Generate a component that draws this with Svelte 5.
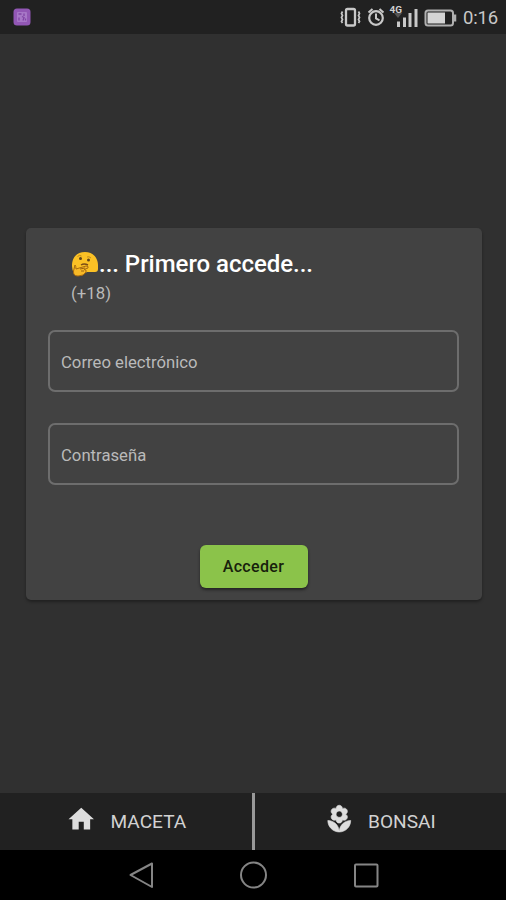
<script>
  const tabs = [
    { label: 'MACETA', icon: 'home' },
    { label: 'BONSAI', icon: 'flower' },
  ];
  const fields = ['Correo electrónico', 'Contraseña'];
</script>

<div class="screen">
  <header class="status">
    <svg class="notice" width="18" height="18" viewBox="0 0 18 18">
      <rect x=".5" y=".5" width="17" height="17" rx="3.5" fill="#9257b5" />
      <rect x="4" y="4" width="10" height="10" rx="1" fill="#a777c7" />
      <path d="M5.5 6h3M11 5.5v2.5M6 9.5v3M9 8.5l2 1-1 3M12.5 10.5v2" stroke="#8145a5" stroke-width="1.3" fill="none" />
    </svg>
    <svg class="indicators" width="118" height="34" viewBox="0 0 118 34" fill="none" stroke="#c8c8c8">
      <rect x="6" y="9" width="9" height="16.500" rx="1.5" stroke-width="2.300" />
      <path d="M2.500 11.500l-1 2 1 2-1 2 1 2-1 2 1 1.500M18.500 11.500l1 2-1 2 1 2-1 2 1 2-1 1.500" stroke-width="1.700" />
      <circle cx="36" cy="18" r="6.800" stroke-width="2.200" />
      <path d="M36 13.500v5l3.500 1.800M28.500 12.500l4-3.500M43.500 12.500l-4-3.500" stroke-width="2" />
      <path d="M54 13h8l-4 5z" fill="#555" stroke="none" />
      <path d="M58.500 21.500v5.500M64.500 17.500v9.500M70 13v14M76 9v18" stroke-width="3" />
      <rect x="85.500" y="10.500" width="27.500" height="15" rx="2.500" stroke="#b0b0b0" stroke-width="2" />
      <rect x="87.500" y="12.500" width="17.500" height="11" fill="#d4d4d4" stroke="none" />
      <path d="M115 14.500v7" stroke="#b0b0b0" stroke-width="2.500" />
      <text x="49.500" y="13" class="network" textLength="12.500" lengthAdjust="spacingAndGlyphs">4G</text>
    </svg>
    <span class="clock">0:16</span>
  </header>

  <main>
    <section class="card">
      <div class="heading">
        <h1>
          <svg width="28" height="26" viewBox="0 0 28 26">
            <path d="M1 15C1 6 6 1 14 1s13 6 13 13v4q0 3-3 3h-8L9 25 3 22Q1 19 1 15Z" fill="#fbc125" />
            <circle cx="9.500" cy="7.500" r="1.500" fill="#60451c" />
            <circle cx="17.500" cy="9" r="1.500" fill="#60451c" />
            <path d="M6.500 5.500q2-2 4-.5M16 6q2-1 4 1" fill="none" stroke="#c08a1c" />
            <path d="M10 14q3-2 7 0" fill="none" stroke="#7b4c16" stroke-width="1.400" />
            <path d="M4 14q1 1 1 4l10-3q3 0 2 2l-4 1.500q3 0 2 2.500-2 4-8 4Q2 25 2.500 20Z" fill="#f7b927" stroke="#a86b10" stroke-width="1" />
            <path d="M9 18l5-1M10 20h3" stroke="#9b6210" stroke-width="1" />
          </svg><span>... Primero accede...</span>
        </h1>
        <p>(+18)</p>
      </div>
      {#each fields as field}
        <div class="field"><span>{field}</span></div>
      {/each}
      <button>Acceder</button>
    </section>
  </main>

  <nav class="tabs">
    {#each tabs as tab}
      <div class="tab {tab.icon}">
        <svg width="30.500" height="30.500" viewBox="0 0 24 24" fill="#dedede">
          {#if tab.icon === 'home'}
            <path d="M10 20v-6h4v6h5v-8h3L12 3 2 12h3v8z" />
          {:else}
            <path stroke="#dedede" stroke-width=".5" d="M12 22c4.97 0 9-4.03 9-9-4.97 0-9 4.03-9 9zM5.6 10.25c0 1.38 1.12 2.5 2.5 2.5.53 0 1.01-.16 1.42-.44l-.02.19c0 1.38 1.12 2.5 2.5 2.5s2.5-1.12 2.5-2.5l-.02-.19c.4.28.89.44 1.42.44 1.38 0 2.5-1.12 2.5-2.5 0-1-.59-1.85-1.43-2.25.84-.4 1.43-1.25 1.43-2.25 0-1.38-1.12-2.5-2.5-2.5-.53 0-1.01.16-1.42.44l.02-.19C14.5 2.12 13.38 1 12 1S9.5 2.12 9.5 3.5l.02.19c-.4-.28-.89-.44-1.42-.44-1.38 0-2.5 1.12-2.5 2.5 0 1 .59 1.85 1.43 2.25-.84.4-1.43 1.25-1.43 2.25zM12 5.5c1.38 0 2.5 1.12 2.5 2.5s-1.12 2.5-2.5 2.5S9.5 9.38 9.5 8s1.12-2.5 2.5-2.5zM3 13c0 4.97 4.03 9 9 9 0-4.97-4.03-9-9-9z" />
          {/if}
        </svg>
        <span>{tab.label}</span>
      </div>
    {/each}
  </nav>

  <footer>
    <svg width="506" height="50" viewBox="0 0 506 50" fill="none" stroke="#858585" stroke-width="2" stroke-linejoin="round">
      <path d="M152 13.500v23.500L130.500 25z" />
      <circle cx="253.500" cy="25" r="12.500" />
      <rect x="355" y="14.500" width="22.500" height="22" rx="1" />
    </svg>
  </footer>
</div>

<style>
  :global(body) { margin: 0; background: #303030; }
  .screen {
    display: flex;
    flex-direction: column;
    width: 506px;
    height: 900px;
    background: #303030;
    font-family: Roboto, "Liberation Sans", sans-serif;
    overflow: hidden;
  }
  .status {
    display: flex;
    align-items: center;
    box-sizing: border-box;
    height: 34px;
    padding: 0 8px 0 13px;
    background: #212121;
  }
  .indicators { margin-left: auto; margin-right: 5px; }
  .network { font: 700 9.500px Roboto, sans-serif; fill: #d0d0d0; stroke: none; }
  .clock { width: 35px; font-size: 18.500px; color: #c8c8c8; white-space: nowrap; line-height: 34px; padding-top: 2px; letter-spacing: -.2px; }
  main { flex: 1; display: flex; justify-content: center; align-items: flex-start; padding-top: 194px; }
  .card {
    display: flex;
    flex-direction: column;
    box-sizing: border-box;
    width: 456px;
    height: 372px;
    padding: 20px 23px 0 22px;
    margin-left: 2px;
    border-radius: 5px;
    background: #424242;
    box-shadow: 0 2px 3px #0005;
  }
  .heading { height: 82px; padding-left: 23px; }
  h1 { display: flex; align-items: center; height: 32px; margin: 0; color: #fff; font-size: 24px; font-weight: 500; line-height: 32px; white-space: nowrap; letter-spacing: -.03px; }
  p { margin: 3px 0 0; color: #bababa; font-size: 16.800px; line-height: 20px; }
  .field {
    display: flex;
    align-items: center;
    box-sizing: border-box;
    height: 62px;
    margin-bottom: 31px;
    padding: 2px 0 0 11px;
    border: 2px solid #6d6d6d;
    border-radius: 7px;
    color: #bababa;
    font-size: 16.700px;
  }
  button {
    align-self: center;
    width: 108px;
    height: 43px;
    margin: 29px 0 0;
    padding: 0;
    border: 0;
    border-radius: 6px;
    background: #8bc34a;
    box-shadow: 0 2px 3px #0007;
    color: #17210c;
    font: 500 16px Roboto, sans-serif;
    letter-spacing: .35px;
  }
  .tabs { display: flex; height: 57px; background: #212121; }
  .tab { display: flex; align-items: center; box-sizing: border-box; color: #d2d2d2; font-size: 19.100px; }
  .tab svg { margin-top: -5px; }
  .home { width: 255px; padding-left: 66px; border-right: 3px solid #999; gap: 14px; }
  .flower { width: 251px; padding-left: 69px; gap: 13.500px; }
  footer { height: 50px; background: #000; }
  footer svg { display: block; }
</style>
